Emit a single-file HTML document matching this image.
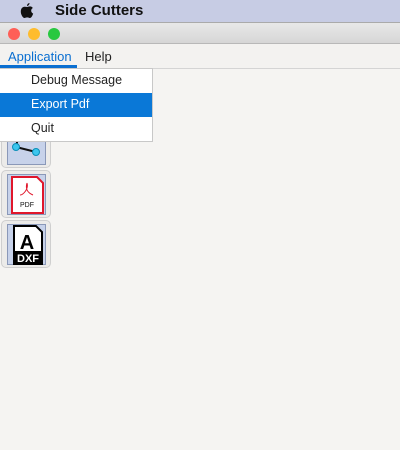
<!DOCTYPE html>
<html><head><style>
*{margin:0;padding:0;box-sizing:border-box}
body{width:400px;height:450px;overflow:hidden;background:#f5f4f2;font-family:"Liberation Sans",sans-serif;position:relative}
.top{position:absolute;left:0;top:0;width:400px;height:22px;background:#c7cce4;}
.top .t{position:absolute;left:55px;top:2px;font-weight:bold;font-size:15px;color:#111}
.title{position:absolute;left:0;top:22px;width:400px;height:22px;background:linear-gradient(#e8e8e8,#d6d6d6);border-top:1px solid #aaa;border-bottom:1px solid #b8b8b8}
.dot{position:absolute;top:5px;width:12px;height:12px;border-radius:50%}
.menu{position:absolute;left:0;top:44px;width:400px;height:25px;background:#f3f2f0;border-bottom:1px solid #d4d4d4;font-size:13px}
.menu span{position:absolute;top:5px}
.ul{position:absolute;left:0;top:65px;width:77px;height:3px;background:#0a6fd1}
.dd{position:absolute;left:0;top:68px;width:153px;height:74px;background:#fff;border:1px solid #c8c8c8;border-left:none;font-size:12.5px;color:#222}
.dd div{position:absolute;left:0;width:152px;height:24px;padding:4px 0 0 31px}
.hl{background:#0a78d7;color:#fff}
.btn{position:absolute;left:1px;width:50px;height:48px;border:1px solid #cfcfcf;border-radius:5px;background:#ecebe9}
.ic{position:absolute;left:5px;top:3px;width:39px;height:41px;background:#c7d2ea;border:1px solid #8a98b8}
</style></head><body>
<div class="top"><svg style="position:absolute;left:20px;top:3px" width="14" height="16" viewBox="0 0 14 16"><path d="M9.5 0c0 1.5-1 2.8-2.5 3 0-1.5 1-2.8 2.5-3zM7 4c1 0 1.8-.6 3-.6 1 0 2.2.5 2.8 1.6-2.4 1.3-2 4.7.4 5.6-.6 1.7-1.8 4.4-3.4 4.4-1 0-1.300-.6-2.600-.6s-1.700.6-2.700.6C2.800 15 .8 11.500.8 8.600.8 5.500 2.700 3.800 4.400 3.800 5.500 3.800 6.200 4 7 4z" fill="#111"/></svg><span class="t">Side Cutters</span></div>
<div class="title"><div class="dot" style="left:8px;background:#fe5f57"></div><div class="dot" style="left:28px;background:#febc2e"></div><div class="dot" style="left:48px;background:#28c840"></div></div>
<div class="menu"><span style="left:8px;color:#0a6fd1">Application</span><span style="left:85px;color:#222">Help</span></div>
<div class="ul"></div>
<div class="btn" style="top:120px"><div class="ic" style="top:-2px;height:46px;border-top:none"><svg width="38" height="44"><path d="M14 0 L8 28 L28 33" stroke="#111" stroke-width="2" fill="none"/><circle cx="8" cy="28" r="3.5" fill="#3cc6ee" stroke="#0a8fb8"/><circle cx="28" cy="33" r="3.5" fill="#3cc6ee" stroke="#0a8fb8"/></svg></div></div>
<div class="btn" style="top:170px"><div class="ic"><svg width="38" height="40"><path d="M4 2h25l6 6v30H4z" fill="#fff" stroke="#e0162b" stroke-width="2"/><path d="M19 8c-2 6 1 10 6 12M19 8c2 6-4 12-7 12" stroke="#e0162b" fill="none"/><text x="19" y="32" font-size="7" text-anchor="middle" font-family="Liberation Sans" fill="#111">PDF</text></svg></div></div>
<div class="btn" style="top:220px"><div class="ic"><svg width="38" height="40"><path d="M6 1h22l6 6v32H6z" fill="#fff" stroke="#000" stroke-width="2"/><text x="19" y="24" font-size="20" font-weight="bold" text-anchor="middle" font-family="Liberation Sans" fill="#000">A</text><rect x="6" y="26" width="28" height="13" fill="#000"/><text x="20" y="37" font-size="11" font-weight="bold" text-anchor="middle" font-family="Liberation Sans" fill="#fff">DXF</text></svg></div></div>
<div class="dd"><div style="top:0">Debug Message</div><div class="hl" style="top:24px">Export Pdf</div><div style="top:48px">Quit</div></div>
</body></html>
